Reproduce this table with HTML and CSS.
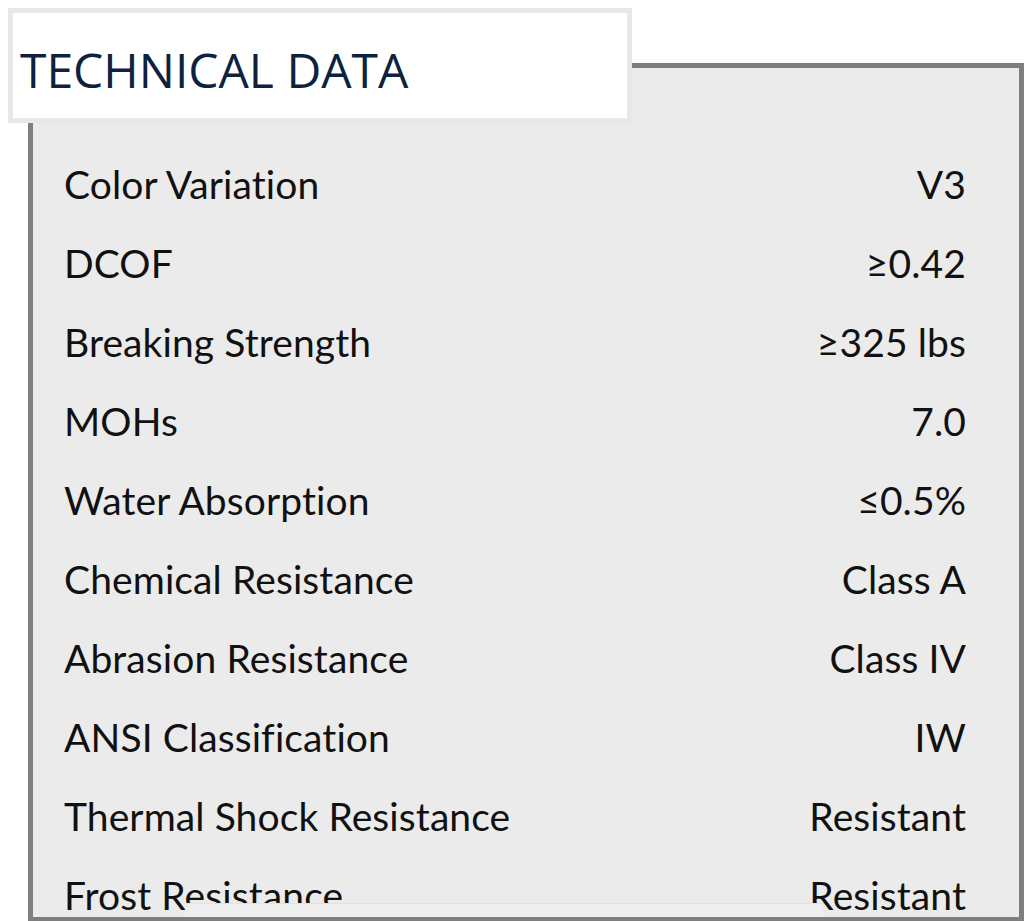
FILE: index.html
```html
<!DOCTYPE html>
<html lang="en">
<head>
<meta charset="utf-8">
<title>Technical Data</title>
<link rel="stylesheet" href="styles.css">
</head>
<body>
<div class="sheet">
  <div class="title-box">
    <h1 class="title">TECHNICAL DATA</h1>
  </div>
  <div class="panel">
    <dl class="specs">
      <div class="row"><dt>Color Variation</dt><dd>V3</dd></div>
      <div class="row"><dt>DCOF</dt><dd>&ge;0.42</dd></div>
      <div class="row"><dt>Breaking Strength</dt><dd>&ge;325 lbs</dd></div>
      <div class="row"><dt>MOHs</dt><dd>7.0</dd></div>
      <div class="row"><dt>Water Absorption</dt><dd>&le;0.5%</dd></div>
      <div class="row"><dt>Chemical Resistance</dt><dd>Class A</dd></div>
      <div class="row"><dt>Abrasion Resistance</dt><dd>Class IV</dd></div>
      <div class="row"><dt>ANSI Classification</dt><dd>IW</dd></div>
      <div class="row"><dt>Thermal Shock Resistance</dt><dd>Resistant</dd></div>
      <div class="row"><dt>Frost Resistance</dt><dd>Resistant</dd></div>
    </dl>
    <div class="next-tab"></div>
  </div>
</div>
</body>
</html>
```
FILE: styles.css
```css
html, body {
  margin: 0;
  padding: 0;
  background: #ffffff;
  overflow: hidden;
}
.sheet {
  padding: 8px 0 0 8px;
  height: 921px;
  box-sizing: border-box;
}
.title-box {
  position: relative;
  z-index: 2;
  width: 624px;
  height: 115px;
  box-sizing: border-box;
  border: 5px solid #e8e8e8;
  background: #ffffff;
  display: flex;
  align-items: center;
  padding-left: 7px;
}
.title {
  margin: 0;
  font-family: "Open Sans", sans-serif;
  font-weight: 400;
  font-size: 48px;
  line-height: 1;
  color: #0e2240;
  padding-top: 8px;
}
.panel {
  position: relative;
  margin-top: -60px;
  margin-left: 20px;
  height: 858px;
  box-sizing: border-box;
  border: 5px solid #7f7f7f;
  border-bottom-width: 4px;
  background: #ebebeb;
  overflow: hidden;
}
.specs {
  margin: 0;
  padding: 77px 53px 0 31px;
  font-family: "Lato", sans-serif;
  font-size: 39px;
  letter-spacing: 0.1px;
  color: #111111;
}
.row {
  display: flex;
  justify-content: space-between;
  align-items: baseline;
  height: 79px;
}
.row dt, .row dd {
  margin: 0;
  line-height: 79px;
}
.next-tab {
  position: absolute;
  left: 152px;
  bottom: -4px;
  width: 638px;
  height: 17px;
  background: #efefef;
  border-top: 1px solid #e2e2e2;
  z-index: 1;
}
```
